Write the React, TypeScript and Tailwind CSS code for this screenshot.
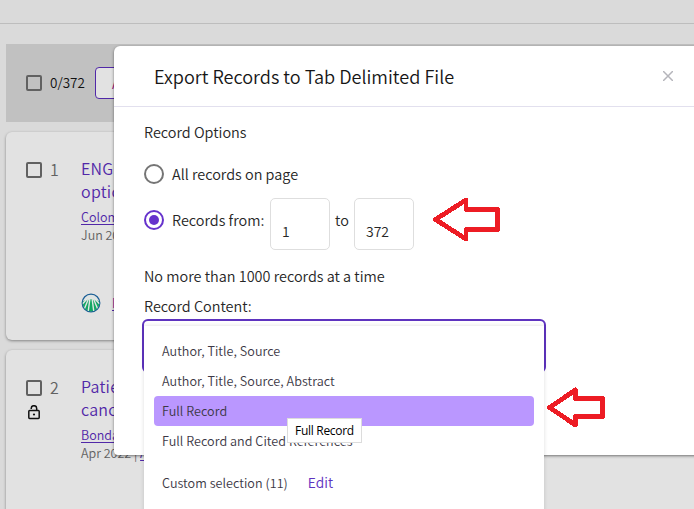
import React from "react";

function Checkbox({ label }: { label: string }) {
  return (
    <span
      role="checkbox"
      aria-checked="false"
      aria-label={label}
      className="block size-4 shrink-0 rounded-[2px] border-2 border-[#616161]"
    />
  );
}

function OpenLock() {
  return (
    <svg className="block" width="12" height="15" viewBox="0 0 12 15" fill="none" stroke="#111" strokeWidth="1.5">
      <rect x="0.8" y="5.6" width="10.4" height="7.800" rx="0.8" />
      <path d="M3.2 3.900V3.4a2.75 2.75 0 0 1 5.5 0v2.200" />
      <circle cx="6" cy="9.5" r="1.1" fill="#111" stroke="none" />
    </svg>
  );
}

function PublisherLogo() {
  return (
    <svg className="block shrink-0" width="20" height="20" viewBox="0 0 20 20">
      <clipPath id="disc">
        <circle cx="10" cy="10" r="8.4" />
      </clipPath>
      <circle cx="10" cy="10" r="8.8" fill="#dfe4e3" stroke="#1c5f96" strokeWidth="1.3" />
      <g clipPath="url(#disc)">
        <path d="M0 9.500Q10 2.500 20 9.500V20H0z" fill="#12a763" />
        <path
          d="M9 5L7 20M11 5L13 20M7.600 5.500L2.500 18M12.400 5.500L17.500 18M6 6L-1 13.500M14 6L21 13.500"
          stroke="#e2e6e4"
          strokeWidth="1.400"
        />
      </g>
    </svg>
  );
}

type RecordProps = {
  index: number;
  title: [string, string];
  author: string;
  date: string;
  source?: string;
  open?: boolean;
  logo?: boolean;
};

function RecordCard({ index, title, author, date, source, open, logo }: RecordProps) {
  return (
    <article className="flex h-[208px] w-[720px] shrink-0 rounded-md bg-[#e2e2e2] pt-[25px] pl-5 shadow-[0_1px_3px_rgba(0,0,0,0.4)]">
      <div className="w-6 shrink-0 pt-[5px]">
        <Checkbox label={`Select record ${index}`} />
        {open && (
          <div className="mt-[9px] ml-[2px]">
            <OpenLock />
          </div>
        )}
      </div>
      <div className="w-[31px] shrink-0 text-[16px] leading-6 text-[#616161]">{index}</div>
      <div className="whitespace-nowrap">
        <div className="text-[16px] leading-[23px] tracking-[0.25px] text-[#5128a8]">
          <div>{title[0]}</div>
          <div>{title[1]}</div>
        </div>
        <div className="mt-[5px] text-[12.500px] leading-[18px] text-[#5128a8]">
          <span className="underline underline-offset-2">{author}</span>
        </div>
        <div className="text-[12.500px] leading-[18px] text-[#616161]">
          {date}
          {source && <span className="text-[#5128a8] underline underline-offset-2">{source}</span>}
        </div>
        {logo && (
          <div className="mt-[49px] flex items-center gap-[11px] text-[12.500px] leading-5 text-[#8d2aa0]">
            <PublisherLogo />
            <span className="underline decoration-[#5128a8] underline-offset-2">Full</span>
          </div>
        )}
      </div>
    </article>
  );
}

function ResultsPage() {
  return (
    <div className="flex h-[509px] w-[694px] flex-col overflow-hidden bg-[#dadada]">
      <div className="h-6 shrink-0 border-b border-[#bdbdbd]" />
      <div className="flex flex-col pt-5 pl-[6px]">
        <div className="flex h-[78px] w-[720px] shrink-0 items-center bg-[#c1c1c1] pl-5">
          <Checkbox label="Select all" />
          <span className="ml-2 w-[45px] pb-px text-[13.500px] text-[#111]">0/372</span>
          <span className="flex h-8 w-40 items-center rounded-[4px] border border-[#5128a8] bg-[#e2e2e2] pl-4 text-[14px] text-[#a02080]">
            Add
          </span>
        </div>
        <div className="mt-[10px] flex flex-col gap-[10px]">
          <RecordCard index={1} title={["ENGOT", "options"]} author="Colombo" date="Jun 2022" logo />
          <RecordCard index={2} title={["Patient", "cancer"]} author="Bondar" date="Apr 2022 | " source="A" open />
        </div>
      </div>
    </div>
  );
}

function Radio({ checked }: { checked?: boolean }) {
  return checked ? (
    <span className="flex size-5 shrink-0 items-center justify-center rounded-full border-2 border-[#6633cc]">
      <span className="size-[10px] rounded-full bg-[#6633cc]" />
    </span>
  ) : (
    <span className="size-5 shrink-0 rounded-full border-2 border-[#757575]" />
  );
}

function RangeInput({ value }: { value: string }) {
  return (
    <span className="flex h-[52px] w-[60px] items-end rounded-[5px] border border-[#dedede] pb-[8px] pl-[11px] text-[14px] leading-5 text-[#262626]">
      {value}
    </span>
  );
}

function Arrow({ width, height, points }: { width: number; height: number; points: string }) {
  return (
    <svg className="block" width={width} height={height} shapeRendering="crispEdges">
      <polygon points={points} fill="none" stroke="#ed1c24" strokeWidth="4.800" strokeLinejoin="round" />
    </svg>
  );
}

const OPTIONS = [
  "Author, Title, Source",
  "Author, Title, Source, Abstract",
  "Full Record",
  "Full Record and Cited References",
];

function ContentMenu() {
  return (
    <div className="absolute top-[326px] left-[144px] h-[190px] w-[400px] bg-white px-[10px] pt-[10px] text-[12.600px] tracking-[0.035px] text-[#3c3845] shadow-[0_0_4px_rgba(0,0,0,0.14)]">
      {OPTIONS.map((option) => (
        <div
          key={option}
          className={
            option === "Full Record"
              ? "flex h-[30px] items-center rounded-[4px] bg-[#ba97ff] px-2"
              : "flex h-[30px] items-center px-2"
          }
        >
          {option}
        </div>
      ))}
      <div className="mt-3 flex h-[30px] items-center gap-[20px] px-2">
        <span>Custom selection (11)</span>
        <span className="pb-px text-[13.800px] text-[#5e33bf]">Edit</span>
      </div>
    </div>
  );
}

function ExportDialog() {
  return (
    <section className="absolute top-[46px] left-[114px] h-[409px] w-[600px] rounded-t-[6px] rounded-b-[4px] bg-white text-[14.450px] text-[#262626] shadow-[0_1px_3px_rgba(0,0,0,0.5)]">
      <header className="flex h-[61px] items-center border-b border-[#e2e0ee] pl-10">
        <h2 className="w-[509px] pt-[2px] text-[18.100px] text-[#161616]">Export Records to Tab Delimited File</h2>
        <svg className="block" width="10" height="10" viewBox="0 0 10 10" stroke="#b5b5bb" strokeWidth="1.500">
          <path d="M0 0L10 10M10 0L0 10" />
        </svg>
      </header>
      <div className="pl-[30px]">
        <div className="mt-[15px] h-5 leading-5">Record Options</div>
        <div className="mt-[22px] flex h-5 items-center gap-2 leading-5">
          <Radio />
          All records on page
        </div>
        <div className="mt-[14px] flex h-[52px] items-center">
          <div className="flex w-[126px] shrink-0 items-center gap-2 pb-2">
            <Radio checked />
            <span className="whitespace-nowrap">Records from:</span>
          </div>
          <RangeInput value="1" />
          <span className="w-6 pb-2 text-center">to</span>
          <RangeInput value="372" />
        </div>
        <div className="mt-[16px] h-5 leading-5">No more than 1000 records at a time</div>
        <div className="mt-[10px] h-5 leading-5">Record Content:</div>
        <div className="mt-[3px] -ml-[2px] h-[54px] w-[404px] rounded-[6px] border-2 border-[#5e33bf]" />
      </div>
    </section>
  );
}

export default function App() {
  return (
    <main className="relative h-[509px] w-[694px] overflow-hidden font-['Noto_Sans_CJK_SC',sans-serif] font-[350]">
      <ResultsPage />
      <ExportDialog />
      <ContentMenu />
      <div className="absolute top-[418px] left-[287px] flex h-[25px] w-[75px] items-center justify-center border border-[#dcdcdc] bg-white font-['Open_Sans',sans-serif] text-[12px] font-normal tracking-[-0.3px] whitespace-nowrap text-black">
        Full Record
      </div>
      <div className="absolute top-[196px] left-[431px]">
        <Arrow width={72} height={48} points="4.500,23.500 35,4 35,13.500 66.500,13.500 66.500,33.500 35,33.500 35,43" />
      </div>
      <div className="absolute top-[386px] left-[545px]">
        <Arrow width={62} height={44} points="4.500,21.500 30.500,4 30.500,12.500 57.500,12.500 57.500,30.500 30.500,30.500 30.500,39" />
      </div>
    </main>
  );
}
